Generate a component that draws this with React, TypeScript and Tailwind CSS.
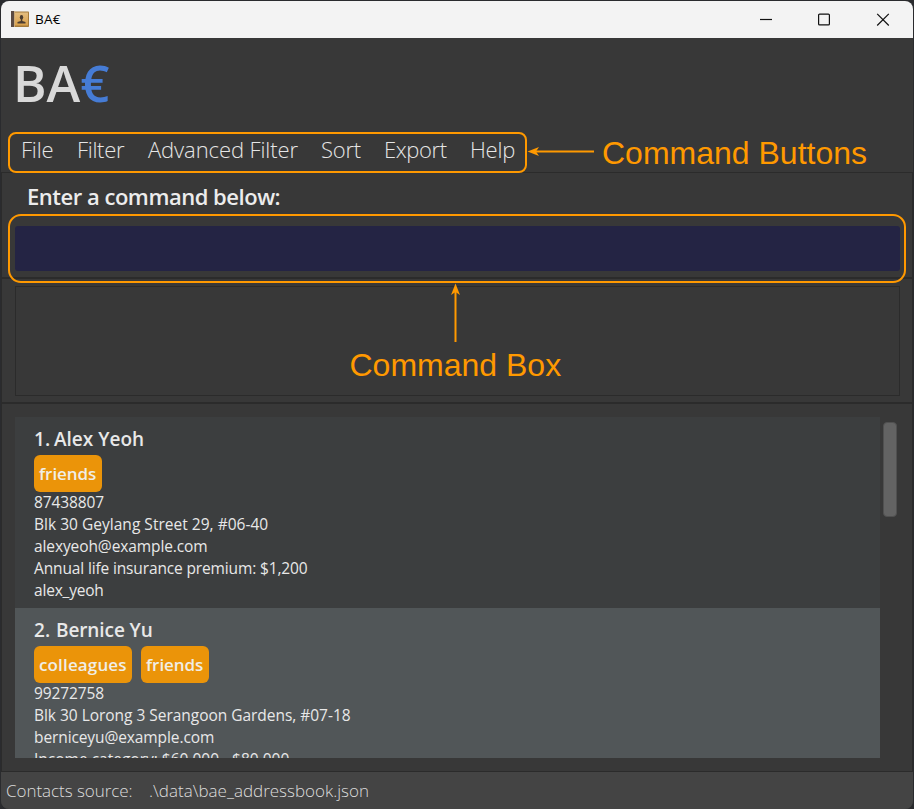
import type { ReactNode } from "react";

const menus = [
  { label: "File", cls: "w-[56px] tracking-[-0.2px]" },
  { label: "Filter", cls: "w-[71px] tracking-[-0.3px]" },
  { label: "Advanced Filter", cls: "w-[173px] tracking-[-0.1px]" },
  { label: "Sort", cls: "w-[63px] tracking-[-0.2px]" },
  { label: "Export", cls: "w-[86px] tracking-[-0.4px]" },
  { label: "Help", cls: "tracking-[-0.2px]" },
];

type Line = { text: string; cls?: string };

const contacts: { id: number; name: string; tags: string[]; lines: Line[]; bg: string }[] = [
  {
    id: 1,
    name: "Alex Yeoh",
    tags: ["friends"],
    bg: "bg-[#3c3e3f]",
    lines: [
      { text: "87438807", cls: "tracking-[-0.1px]" },
      { text: "Blk 30 Geylang Street 29, #06-40", cls: "tracking-[0.02px]" },
      { text: "alexyeoh@example.com", cls: "tracking-[-0.1px]" },
      { text: "Annual life insurance premium: $1,200", cls: "tracking-[-0.14px]" },
      { text: "alex_yeoh", cls: "tracking-[-0.2px]" },
    ],
  },
  {
    id: 2,
    name: "Bernice Yu",
    tags: ["colleagues", "friends"],
    bg: "bg-[#515658]",
    lines: [
      { text: "99272758", cls: "tracking-[-0.1px]" },
      { text: "Blk 30 Lorong 3 Serangoon Gardens, #07-18", cls: "tracking-[-0.03px]" },
      { text: "berniceyu@example.com", cls: "tracking-[-0.1px]" },
      { text: "Income category: $60,000 - $80,000" },
    ],
  },
];

const tagWidths: Record<string, string> = {
  friends: "w-[68px] tracking-[-0.05px]",
  colleagues: "w-[98px] tracking-[0.15px]",
};

function Tag({ children, cls }: { children: ReactNode; cls: string }) {
  return (
    <span
      className={`flex h-[37px] items-center rounded-[6px] bg-[#eb9409] pl-[5px] text-[17px] font-semibold text-[#f0eee6] ${cls}`}
    >
      {children}
    </span>
  );
}

function TitleBar() {
  return (
    <header className="flex h-[37px] shrink-0 items-center rounded-t-[8px] bg-[#f3f3f3] pl-[10px] text-black">
      <svg width="19" height="17" viewBox="0 0 19 17">
        <defs>
          <linearGradient id="cover" x1="0" y1="0" x2="0" y2="1">
            <stop offset="0" stopColor="#e3bd80" />
            <stop offset="1" stopColor="#d9a04a" />
          </linearGradient>
        </defs>
        <rect x="0.5" y="0.5" width="17.5" height="15.5" rx="0.8" fill="#a47a3a" />
        <rect x="3.5" y="1.5" width="13.5" height="13" fill="url(#cover)" />
        <rect x="0" y="0" width="3" height="16" fill="#5a4a42" />
        <rect x="3" y="0.5" width="1" height="15.5" fill="#c9a878" />
        <ellipse cx="10.5" cy="6.2" rx="1.7" ry="2.3" fill="#4b3c30" />
        <path d="M9.8 7.5h1.5v2.4l3.2 1v1.5H6.5v-1.5l3.3-1z" fill="#4b3c30" />
      </svg>
      <span className="ml-[5px] text-[13.5px] tracking-[0.2px]">BA€</span>
      <svg className="ml-auto mr-[23px]" width="130" height="14" viewBox="0 0 130 14" fill="none" stroke="#111" strokeWidth="1.2">
        <path d="M0 6.5h12" />
        <rect x="58.6" y="1.1" width="10.8" height="10.8" rx="1" />
        <path d="M117.2 0.9l11.6 11.6M128.8 0.9l-11.6 11.6" />
      </svg>
    </header>
  );
}

function Annotations() {
  return (
    <div className="pointer-events-none absolute inset-0 font-['Liberation_Sans',Arial,sans-serif] text-[32px] leading-9 text-[#ff9900]">
      <div className="absolute left-[8px] top-[132px] h-[41px] w-[519px] rounded-[8px] border-2 border-[#ff9900]" />
      <div className="absolute left-[8px] top-[214px] h-[69px] w-[898px] rounded-[13px] border-2 border-[#ff9900]" />
      <svg className="absolute left-[527px] top-[146px]" width="67" height="12" viewBox="0 0 67 12">
        <path d="M8 5.5h59" stroke="#ff9900" strokeWidth="2" />
        <path d="M0.5 5.5L12 1L9 5.5L12 10z" fill="#ff9900" />
      </svg>
      <svg className="absolute left-[450px] top-[283px]" width="12" height="59" viewBox="0 0 12 59">
        <path d="M5.5 8v51" stroke="#ff9900" strokeWidth="2" />
        <path d="M5.5 0.5L1 12L5.5 9L10 12z" fill="#ff9900" />
      </svg>
      <span className="absolute left-[602px] top-[135px] whitespace-nowrap">Command Buttons</span>
      <span className="absolute left-[349.5px] top-[347px] whitespace-nowrap">Command Box</span>
    </div>
  );
}

export default function App() {
  return (
    <div className="relative h-[809px] w-[914px] overflow-hidden bg-[#2a2b2e] font-['Open_Sans','Noto_Sans',sans-serif]">
      <div className="flex h-full flex-col pl-px pr-px pt-px">
        <TitleBar />
        <main className="flex min-h-0 flex-1 flex-col overflow-hidden rounded-b-[8px] bg-[#383838]">
          <h1 className="h-[92px] pl-[12px] pt-[9px] text-[51px] font-semibold leading-[70px] text-[#d9d9d9]">
            BA<span className="text-[#467cd5]">€</span>
          </h1>
          <nav className="flex h-[42px] pl-[20px] text-[22px] font-light leading-[39px] text-[#e6e6e6]">
            {menus.map((m) => (
              <span key={m.label} className={`shrink-0 whitespace-nowrap ${m.cls}`}>
                {m.label}
              </span>
            ))}
          </nav>

          <section className="h-[107px] border border-b-2 border-[#2b2b2b] pl-[13px] pr-[12px]">
            <p className="h-[53px] pl-[12px] pt-[5px] text-[22px] font-semibold leading-[36px] tracking-[-0.48px] text-[#ececec]">
              Enter a command below:
            </p>
            <div className="h-[45px] rounded-[3px] bg-[#242444]" />
          </section>

          <section className="h-[125px] border-x border-b-2 border-[#2b2b2b] pl-[13px] pr-[12px] pt-[7px]">
            <div className="h-[110px] border border-[#2b2b2b]" />
          </section>

          <section className="flex h-[368px] border-x border-b border-[#2b2b2b] pl-[13px] pt-[13px]">
            <ul className="h-[341px] w-[865px] overflow-hidden">
              {contacts.map((c) => (
                <li key={c.id} className={`h-[191px] pl-[19px] pt-[9px] text-[#e8e8e8] ${c.bg}`}>
                  <div className="flex h-[29px] text-[19px] font-semibold leading-[26px]">
                    <span className={c.id === 1 ? "w-[20px]" : "w-[22px]"}>{c.id}.</span>
                    <span className={c.id === 1 ? "" : "tracking-[-0.1px]"}>{c.name}</span>
                  </div>
                  <div className="flex gap-[9px]">
                    {c.tags.map((t) => (
                      <Tag key={t} cls={tagWidths[t]}>
                        {t}
                      </Tag>
                    ))}
                  </div>
                  <div className="-mt-px">
                    {c.lines.map((l) => (
                      <p key={l.text} className={`h-[22px] whitespace-nowrap text-[15.5px] leading-[22px] ${l.cls ?? ""}`}>
                        {l.text}
                      </p>
                    ))}
                  </div>
                </li>
              ))}
            </ul>
            <div className="ml-[3px] mt-[5px] h-[95px] w-[14px] rounded-[4px] border border-[#505050] bg-[#636363]" />
          </section>

          <footer className="flex flex-1 bg-[#444444] pl-[5px] text-[17px] font-light leading-[37px] text-[#dcdcdc]">
            <span className="w-[143px] tracking-[-0.05px]">Contacts source:</span>
            <span>.\data\bae_addressbook.json</span>
          </footer>
        </main>
      </div>
      <Annotations />
    </div>
  );
}
